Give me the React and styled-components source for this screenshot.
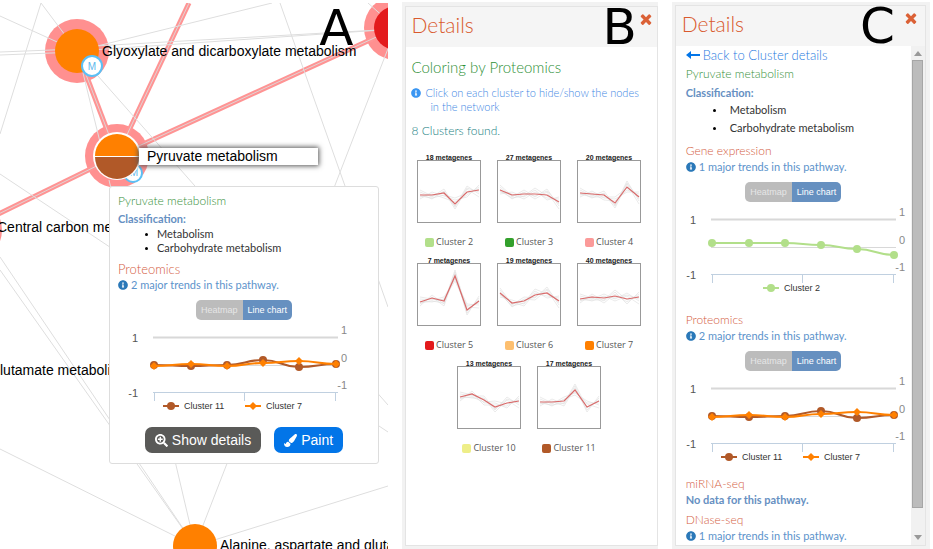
import React from "react";
import styled, { createGlobalStyle } from "styled-components";
import { FaInfoCircle, FaPaintBrush, FaSearchPlus } from "react-icons/fa";

const light = `Lato, "Open Sans", sans-serif`;
const arial = `"Liberation Sans", Arial, sans-serif`;

const GlobalStyle = createGlobalStyle`
  *, *::before { box-sizing: border-box; }
  body { margin: 0; background: #fff; font-family: ${light}; font-weight: 300; color: #333; }
  h2, h3, h4, p, ul { margin: 0; padding: 0; font-weight: 300; }
  button { font: inherit; border: 0; padding: 0; background: none; cursor: pointer; }
`;

const Page = styled.main`
  display: grid;
  grid-template-columns: minmax(0, 388fr) minmax(0, 255fr) minmax(0, 258fr);
  gap: 14px;
  min-height: 100vh;
  padding: 2px 3px 0 0;
  overflow: hidden;
`;

const Network = styled.section`
  position: relative;
  overflow: hidden;
  margin-top: 1px;
`;

const NetworkDrawing = styled.svg`
  position: absolute;
  top: 0;
  left: 0;
  font-family: ${arial};
  font-size: 14px;
  fill: #000;
`;

const NodeLabel = styled.div`
  position: absolute;
  top: 145px;
  left: 139px;
  width: 179px;
  padding-left: 8px;
  background: #fff;
  box-shadow: 0 0 5px 1px #555;
  color: #000;
  font: 14px/17px ${arial};
`;

const Letter = styled.span`
  position: absolute;
  top: ${(p) => p.$top}px;
  right: ${(p) => p.$right}px;
  color: #000;
  font: 50px/50px "DejaVu Sans", sans-serif;
`;

const Popup = styled.article`
  position: absolute;
  top: 183px;
  left: 109px;
  width: 270px;
  padding: 4px 8px 10px;
  background: #fff;
  border: 1px solid #ddd;
  border-radius: 3px;
`;

const Actions = styled.div`
  display: flex;
  justify-content: center;
  gap: 13px;
  margin-top: 14px;
`;

const Action = styled.button`
  display: flex;
  align-items: center;
  gap: 4px;
  height: 26px;
  && { padding: 0 10px; }
  border-radius: 7px;
  background: ${(p) => (p.$primary ? "#0275e8" : "#5a5a58")} !important;
  color: #fff;
  && { font: 14px/26px ${arial}; }
`;

const Frame = styled.section`
  position: relative;
  display: flex;
  flex-direction: column;
  padding: ${(p) => p.$top}px ${(p) => p.$right}px 3px 3px;
  background: #f2f2f2;
`;

const Panel = styled.div`
  flex: 1;
  display: flex;
  flex-direction: column;
  border: 1px solid #e4e4e4;
  background: #fff;
`;

const PanelHeader = styled.header`
  display: flex;
  justify-content: space-between;
  height: 40px;
  padding: 0 ${(p) => p.$right}px 0 ${(p) => p.$left}px;
  background: #f5f5f5;
`;

const PanelTitle = styled.h2`
  color: #d95a2e;
  font-size: 21px;
  line-height: 36px;
`;

const CloseButton = styled.button`
  height: 24px;
  svg { display: block; }
`;

const ClusterBody = styled.div`
  flex: 1;
  padding: 9px 5px;
`;

const ColoringTitle = styled.h3`
  color: #2f9038;
  font-size: 15px;
  line-height: 22px;
`;

const Hint = styled.p`
  margin-top: 8px;
  padding: 0 4px 0 19px;
  text-indent: -19px;
  color: #4288e4;
  font-size: 11px;
  line-height: 14px;
  svg { color: #3a96f2; margin-right: 4px; vertical-align: -1px; }
`;

const Found = styled.p`
  margin-top: 8px;
  color: #17807f;
  font-size: 12px;
  line-height: 18px;
`;

const ClusterGrid = styled.div`
  display: flex;
  flex-wrap: wrap;
  justify-content: center;
  margin: 15px 0 0 -5px;
`;

const ClusterButton = styled.button`
  display: flex;
  flex-direction: column;
  align-items: center;
  width: 80px;
  height: 103px;
`;

const ClusterLabel = styled.span`
  display: flex;
  align-items: center;
  gap: 2px;
  margin-top: 9px;
  color: #555;
  font: 400 9px/16px "Open Sans", sans-serif;
`;

const Swatch = styled.i`
  width: 9px;
  height: 9px;
  border-radius: 2px;
  background: ${(p) => p.$color};
`;

const DetailRow = styled.div`
  flex: 1;
  display: flex;
`;

const DetailBody = styled.div`
  flex: 1;
  min-width: 0;
  padding: 0 10px;
`;

const BackLink = styled.a`
  display: flex;
  align-items: center;
  gap: 3px;
  color: #1f7be0;
  font-size: 13px;
  line-height: 18px;
  text-decoration: none;
`;

const PathwayTitle = styled.h3`
  color: #37913a;
  font-size: 12px;
  line-height: 20px;
`;

const ClassTitle = styled.h4`
  margin-top: ${(p) => (p.$roomy ? 1 : 0)}px;
  color: #6690c2;
  font-size: 11px;
  font-weight: 700;
  line-height: 16px;
`;

const ClassList = styled.ul`
  list-style: none;
`;

const ClassItem = styled.li`
  display: flex;
  align-items: center;
  gap: ${(p) => (p.$roomy ? 14 : 9)}px;
  padding-left: 27px;
  font-size: 11px;
  font-weight: 400;
  line-height: ${(p) => (p.$roomy ? 18 : 14)}px;
  &::before {
    content: "";
    width: 3px;
    height: 3px;
    border-radius: 50%;
    background: #000;
  }
`;

const Section = styled.section`
  margin-top: ${(p) => p.$gap}px;
`;

const SectionTitle = styled.h4`
  color: #d4603f;
  font-size: ${(p) => (p.$small ? 12 : 13)}px;
  line-height: 18px;
`;

const Trend = styled.p`
  display: flex;
  align-items: center;
  gap: 3px;
  color: ${(p) => (p.$strong ? "#6690c2" : "#5c93cb")};
  font-size: 11px;
  font-weight: ${(p) => (p.$strong ? 700 : 400)};
  line-height: 14px;
  svg { color: #2a78b8; }
`;

const Toggle = styled.div`
  display: flex;
  justify-content: center;
  margin-top: 8px;
`;

const ToggleButton = styled.button`
  height: 20px;
  && { padding: 0 5px; font: 9px/20px ${arial}; }
  background: ${(p) => (p.$active ? "#6690c0" : "#bcbcbc")} !important;
  color: ${(p) => (p.$active ? "#fff" : "#e6e6e6")};
  border-radius: ${(p) => (p.$active ? "0 5px 5px 0" : "5px 0 0 5px")};
`;

const ChartSvg = styled.svg`
  display: block;
  margin: 3px 0 0 ${(p) => p.$inset}px;
  overflow: visible;
  font-family: ${arial};
`;

const ScrollTrack = styled.div`
  display: flex;
  flex-direction: column;
  align-items: center;
  width: 14px;
  padding: 5px 0;
  background: #f1f1f1;
`;

const ScrollThumb = styled.div`
  width: 11px;
  height: 448px;
  margin: 4px 0 auto;
  border: 1px solid #a6a6a6;
  background: #bcbcbc;
`;

const CloseIcon = () => (
  <svg width="16" height="16" viewBox="0 0 1792 1792" fill="#db6136" aria-hidden="true">
    <path d="M1490 1322q0 40-28 68l-136 136q-28 28-68 28t-68-28l-294-294-294 294q-28 28-68 28t-68-28l-136-136q-28-28-28-68t28-68l294-294-294-294q-28-28-28-68t28-68l136-136q28-28 68-28t68 28l294 294 294-294q28-28 68-28t68 28l136 136q28 28 28 68t-28 68l-294 294 294 294q28 28 28 68z" />
  </svg>
);

const ArrowLeft = () => (
  <svg width="14" height="10" viewBox="0 0 14 10" aria-hidden="true">
    <path d="M0 5 L5 1 V4 H14 V6 H5 V9 Z" fill="#0275e8" />
  </svg>
);

const ScrollArrow = ({ down }) => (
  <svg width="8" height="5" viewBox="0 0 8 5" aria-hidden="true">
    <path d={down ? "M0 0H8L4 5Z" : "M0 5H8L4 0Z"} fill="#999" />
  </svg>
);

const greyEdges = [
  [41, 3, 77, 51], [41, 3, 0, 134], [0, 16, 77, 51], [0, 52, 77, 49], [0, 55, 77, 52],
  [77, 51, 272, 3], [77, 47, 396, 29], [77, 51, 396, 29], [83, 73, 101, 146],
  [98, 76, 388, 405], [280, 3, 388, 307], [368, 3, 396, 28], [396, 28, 195, 546],
  [388, 486, 195, 546], [0, 449, 195, 546], [0, 257, 195, 546], [0, 270, 195, 546],
  [109, 180, 195, 546], [0, 174, 388, 432],
];

const pinkEdges = [
  [77, 51, 117, 156], [189, 3, 117, 156], [396, 28, 117, 156], [-30, 228, 117, 156],
];

const Line = ({ e, ...rest }) => <line x1={e[0]} y1={e[1]} x2={e[2]} y2={e[3]} {...rest} />;

const NetworkMap = () => (
  <NetworkDrawing width="388" height="549" viewBox="0 3 388 549">
    <circle cx="77" cy="51" r="32" fill="#ff9090" />
    <circle cx="117" cy="156" r="32" fill="#ff9090" />
    <circle cx="396" cy="28" r="32" fill="#ff9090" />
    <circle cx="-30" cy="230" r="32" fill="#ff9090" />
    {pinkEdges.map((e, i) => (
      <g key={i}>
        <Line e={e} stroke="#ff9494" strokeWidth="5" />
        <Line e={e} stroke="#e0d4d4" strokeWidth="1" />
      </g>
    ))}
    {greyEdges.map((e, i) => <Line key={i} e={e} stroke="#dedede" strokeWidth="1" />)}
    <circle cx="77" cy="51" r="22" fill="#ff8000" />
    <circle cx="396" cy="28" r="22" fill="#e31a1c" />
    <circle cx="195" cy="546" r="22" fill="#ff8000" />
    <circle cx="133" cy="173" r="9" fill="#fff" stroke="#5bc0f5" strokeWidth="2" />
    <text x="134" y="176" fontSize="10" fill="#5bb8ec" textAnchor="middle">M</text>
    <circle cx="117" cy="156" r="24" fill="#fff" />
    <path d="M95 156a22 22 0 0 1 44 0z" fill="#ff8000" />
    <path d="M95 157a22 22 0 0 0 44 0z" fill="#b15928" />
    <circle cx="92" cy="66" r="10" fill="#fff" stroke="#5bc0f5" strokeWidth="2" />
    <text x="92" y="70" fontSize="10" fill="#5bb8ec" textAnchor="middle">M</text>
    <text x="102" y="56">Glyoxylate and dicarboxylate metabolism</text>
    <text x="-3" y="232">Central carbon metabolism</text>
    <text x="0" y="375">lutamate metabolism</text>
    <text x="220" y="550">Alanine, aspartate and glutamate</text>
  </NetworkDrawing>
);

const xs = [26, 63, 99, 135, 171, 208];

const smooth = (ys) =>
  ys.reduce((d, y, i) => {
    if (!i) return `M${xs[0]} ${y}`;
    const m = (xs[i] + xs[i - 1]) / 2;
    return `${d} C${m} ${ys[i - 1]} ${m} ${y} ${xs[i]} ${y}`;
  }, "");

const Marker = ({ x, y, s }) =>
  s.diamond
    ? <path d={`M${x - 4} ${y}L${x} ${y - 4}L${x + 4} ${y}L${x} ${y + 4}Z`} fill={s.color} />
    : <circle cx={x} cy={y} r="4" fill={s.color} />;

const cluster11 = { name: "Cluster 11", color: "#b15928", ys: [42, 43, 42, 37, 44, 41], at: 35 };
const cluster7 = { name: "Cluster 7", color: "#ff8000", diamond: true, ys: [43, 41, 43, 40, 38, 41], at: 117 };
const cluster2 = { name: "Cluster 2", color: "#b2df8a", ys: [38, 38, 38, 40, 44, 50], at: 77 };

const LineChart = ({ series, inset }) => (
  <ChartSvg width="225" height="90" viewBox="0 0 225 90" $inset={inset} role="img" aria-label="Trend line chart">
    <path d="M25 14.5H210" stroke="#d8d8d8" strokeWidth="2" />
    <path d="M25 42.5H210" stroke="#d8d8d8" />
    <path d="M25 69.5H210M26.5 69V78M116.5 69V78M207.5 69V78" stroke="#c0d0e0" fill="none" />
    <g fontSize="11" fill="#555">
      <text x="10" y="19" textAnchor="end">1</text>
      <text x="10" y="74" textAnchor="end">-1</text>
    </g>
    <g fontSize="11" fill="#888">
      <text x="219" y="11" textAnchor="end">1</text>
      <text x="219" y="39" textAnchor="end">0</text>
      <text x="219" y="66" textAnchor="end">-1</text>
    </g>
    {series.map((s) => (
      <g key={s.name}>
        <path d={smooth(s.ys)} fill="none" stroke={s.color} strokeWidth="2" />
        {s.ys.map((y, i) => <Marker key={i} x={xs[i]} y={y} s={s} />)}
        <path d={`M${s.at} 83H${s.at + 16}`} stroke={s.color} strokeWidth="2" />
        <Marker x={s.at + 8} y={83} s={s} />
        <text x={s.at + 21} y="86" fontSize="9" fill="#333">{s.name}</text>
      </g>
    ))}
  </ChartSvg>
);

const TrendSection = ({ title, count, series, gap, small, inset = 0 }) => (
  <Section $gap={gap}>
    <SectionTitle $small={small}>{title}</SectionTitle>
    <Trend><FaInfoCircle size={10} />{count} major trends in this pathway.</Trend>
    {series && (
      <>
        <Toggle>
          <ToggleButton>Heatmap</ToggleButton>
          <ToggleButton $active>Line chart</ToggleButton>
        </Toggle>
        <LineChart series={series} inset={inset} />
      </>
    )}
  </Section>
);

const Pathway = ({ roomy }) => (
  <>
    <PathwayTitle>Pyruvate metabolism</PathwayTitle>
    <ClassTitle $roomy={roomy}>Classification:</ClassTitle>
    <ClassList>
      <ClassItem $roomy={roomy}>Metabolism</ClassItem>
      <ClassItem $roomy={roomy}>Carbohydrate metabolism</ClassItem>
    </ClassList>
  </>
);

const clusters = [
  { id: 2, n: 18, color: "#b2df8a", ys: [35, 35, 33, 44, 32, 30] },
  { id: 3, n: 27, color: "#33a02c", ys: [30, 35, 34, 34, 35, 42] },
  { id: 4, n: 20, color: "#fb9a99", ys: [33, 34, 35, 43, 27, 37] },
  { id: 5, n: 7, color: "#e31a1c", ys: [39, 35, 38, 13, 47, 38] },
  { id: 6, n: 19, color: "#fdbf6f", ys: [30, 40, 38, 32, 30, 38] },
  { id: 7, n: 40, color: "#ff8000", ys: [36, 34, 35, 33, 36, 34] },
  { id: 10, n: 13, color: "#eeee88", ys: [31, 28, 34, 41, 37, 35] },
  { id: 11, n: 17, color: "#b15928", ys: [36, 36, 35, 24, 41, 35] },
];

const thumbX = [3, 15, 27, 38, 50, 62];
const spread = [
  [-3, 2, -4, 3, -6, 4], [4, -3, 3, -4, 5, -5], [-1, 4, -2, 5, -3, 7],
  [2, -1, 5, -2, 3, -3], [-5, 1, -1, 2, -4, 2], [1, 3, 2, -6, 1, -1],
];

const thumbPath = (ys, off) => ys.map((y, i) => `${i ? "L" : "M"}${thumbX[i]} ${y + 5 + (off ? off[i] : 0)}`).join("");

const Thumb = ({ c }) => (
  <svg width="64" height="70" viewBox="0 0 64 70" aria-hidden="true">
    <rect x="0.5" y="5.5" width="63" height="62" fill="#fff" stroke="#999" />
    {spread.map((off, i) => (
      <path key={i} d={thumbPath(c.ys, off)} fill="none" stroke="#ddd" strokeOpacity="0.6" />
    ))}
    <path d={thumbPath(c.ys)} fill="none" stroke="#d96a6a" strokeWidth="1.2" />
    <text x="32" y="5" fontSize="7" fontWeight="700" fontFamily="Liberation Sans, Arial, sans-serif" textAnchor="middle" fill="#222">{c.n} metagenes</text>
  </svg>
);

export default function App() {
  return (
    <>
      <GlobalStyle />
      <Page>
        <Network>
          <NetworkMap />
          <NodeLabel>Pyruvate metabolism</NodeLabel>
          <Popup>
            <Pathway />
            <TrendSection title="Proteomics" count={2} series={[cluster11, cluster7]} gap={5} inset={10} />
            <Actions>
              <Action><FaSearchPlus size={13} />Show details</Action>
              <Action $primary><FaPaintBrush size={13} />Paint</Action>
            </Actions>
          </Popup>
          <Letter $top={0} $right={35}>A</Letter>
        </Network>

        <Frame $top={4} $right={0}>
          <Panel>
            <PanelHeader $left={5} $right={3}>
              <PanelTitle>Details</PanelTitle>
              <CloseButton aria-label="Close"><CloseIcon /></CloseButton>
            </PanelHeader>
            <ClusterBody>
              <ColoringTitle>Coloring by Proteomics</ColoringTitle>
              <Hint><FaInfoCircle size={10} />Click on each cluster to hide/show the nodes in the network</Hint>
              <Found>8 Clusters found.</Found>
              <ClusterGrid>
                {clusters.map((c) => (
                  <ClusterButton key={c.id}>
                    <Thumb c={c} />
                    <ClusterLabel><Swatch $color={c.color} />Cluster {c.id}</ClusterLabel>
                  </ClusterButton>
                ))}
              </ClusterGrid>
            </ClusterBody>
          </Panel>
          <Letter $top={0} $right={21}>B</Letter>
        </Frame>

        <Frame $top={3} $right={4}>
          <Panel>
            <PanelHeader $left={6} $right={6}>
              <PanelTitle>Details</PanelTitle>
              <CloseButton aria-label="Close"><CloseIcon /></CloseButton>
            </PanelHeader>
            <DetailRow>
              <DetailBody>
                <BackLink href="#clusters"><ArrowLeft />Back to Cluster details</BackLink>
                <Pathway roomy />
                <TrendSection small title="Gene expression" count={1} series={[cluster2]} gap={5} />
                <TrendSection small title="Proteomics" count={2} series={[cluster11, cluster7]} gap={16} />
                <Section $gap={11}>
                  <SectionTitle $small>miRNA-seq</SectionTitle>
                  <Trend $strong>No data for this pathway.</Trend>
                </Section>
                <TrendSection small title="DNase-seq" count={1} gap={4} />
              </DetailBody>
              <ScrollTrack>
                <ScrollArrow />
                <ScrollThumb />
                <ScrollArrow down />
              </ScrollTrack>
            </DetailRow>
          </Panel>
          <Letter $top={-1} $right={35}>C</Letter>
        </Frame>
      </Page>
    </>
  );
}
